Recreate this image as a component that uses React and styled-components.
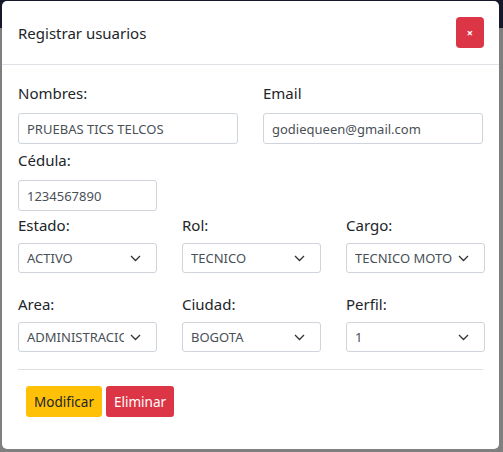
import styled, { createGlobalStyle } from 'styled-components';

const GlobalStyle = createGlobalStyle`
    html, body {
        margin: 0;
        padding: 0;
        height: 100%;
        background: #7f7f7f;
        font-family: "Noto Sans", "Open Sans", sans-serif;
        color: #212529;
    }
    * { box-sizing: border-box; }
`;

const Page = styled.div`
    position: relative;
    width: 503px;
    height: 452px;
    overflow: hidden;
`;

const NavStrip = styled.div`
    height: 28px;
    background: #151828;
`;

const Modal = styled.div`
    position: absolute;
    top: 1px;
    left: 2px;
    width: 497px;
    height: 448px;
    background: #fff;
    border-radius: 5px;
    display: flex;
    flex-direction: column;
`;

const Header = styled.div`
    display: flex;
    align-items: center;
    justify-content: space-between;
    height: 64px;
    padding: 0 15px 0 16px;
    border-bottom: 1px solid #dee2e6;
`;

const Title = styled.h5`
    margin: 0;
    font-size: 15px;
    font-weight: 400;
    line-height: 24px;
`;

const CloseButton = styled.button`
    width: 28px;
    height: 31px;
    border: none;
    border-radius: 4px;
    background: #dc3545;
    color: #fff;
    font-size: 11px;
    font-weight: 700;
    font-family: inherit;
    padding: 0;
    display: flex;
    align-items: center;
    justify-content: center;
`;

const Body = styled.div`
    padding: 16px 16px 0 16px;
`;

const Row = styled.div`
    display: grid;
    grid-template-columns: ${p => p.cols === 2 ? '220px 220px' : '139px 139px 139px'};
    column-gap: 25px;
    margin-bottom: ${p => p.mb || 0}px;
`;

const Field = styled.div`
    display: flex;
    flex-direction: column;
`;

const Label = styled.label`
    font-size: 15px;
    line-height: 24px;
    margin-bottom: ${p => p.tight ? 6 : 8}px;
`;

const Input = styled.div`
    height: 31px;
    border: 1px solid #ced4da;
    border-radius: 3px;
    padding: 0 8px;
    font-size: 13px;
    color: #495057;
    display: flex;
    align-items: center;
    white-space: nowrap;
    overflow: hidden;
`;

const Select = styled(Input)`
    height: 30px;
    padding-right: 15px;
    gap: 6px;
`;

const SelectText = styled.span`
    flex: 1;
    overflow: hidden;
    white-space: nowrap;
`;

const Divider = styled.hr`
    margin: 17px 0 16px 0;
    border: none;
    border-top: 1px solid #dfdfdf;
`;

const Actions = styled.div`
    display: flex;
    gap: 4px;
    padding-left: 8px;
`;

const Button = styled.button`
    height: 31px;
    padding: 0 8px;
    border: none;
    border-radius: 3px;
    font-family: inherit;
    font-size: 13.5px;
    background: ${p => p.variant === 'danger' ? '#dc3545' : '#ffc107'};
    color: ${p => p.variant === 'danger' ? '#fff' : '#212529'};
`;

function Chevron() {
    return (
        <svg width="11" height="7" viewBox="0 0 11 7" fill="none">
            <path d="M1 1 L5.5 5.5 L10 1" stroke="#333" strokeWidth="1.3" />
        </svg>
    );
}

function SelectField({ label, value }) {
    return (
        <Field>
            <Label tight>{label}</Label>
            <Select>
                <SelectText>{value}</SelectText>
                <Chevron />
            </Select>
        </Field>
    );
}

function App() {
    return (
        <Page>
            <GlobalStyle />
            <NavStrip />
            <Modal>
                <Header>
                    <Title>Registrar usuarios</Title>
                    <CloseButton>×</CloseButton>
                </Header>
                <Body>
                    <Row cols={2} mb={4}>
                        <Field>
                            <Label>Nombres:</Label>
                            <Input>PRUEBAS TICS TELCOS</Input>
                        </Field>
                        <Field>
                            <Label>Email</Label>
                            <Input>godiequeen@gmail.com</Input>
                        </Field>
                    </Row>
                    <Row cols={3} mb={2}>
                        <Field>
                            <Label>Cédula:</Label>
                            <Input>1234567890</Input>
                        </Field>
                    </Row>
                    <Row cols={3} mb={19}>
                        <SelectField label="Estado:" value="ACTIVO" />
                        <SelectField label="Rol:" value="TECNICO" />
                        <SelectField label="Cargo:" value="TECNICO MOTORIZADO" />
                    </Row>
                    <Row cols={3}>
                        <SelectField label="Area:" value="ADMINISTRACION" />
                        <SelectField label="Ciudad:" value="BOGOTA" />
                        <SelectField label="Perfil:" value="1" />
                    </Row>
                    <Divider />
                    <Actions>
                        <Button>Modificar</Button>
                        <Button variant="danger">Eliminar</Button>
                    </Actions>
                </Body>
            </Modal>
        </Page>
    );
}

export default App;
